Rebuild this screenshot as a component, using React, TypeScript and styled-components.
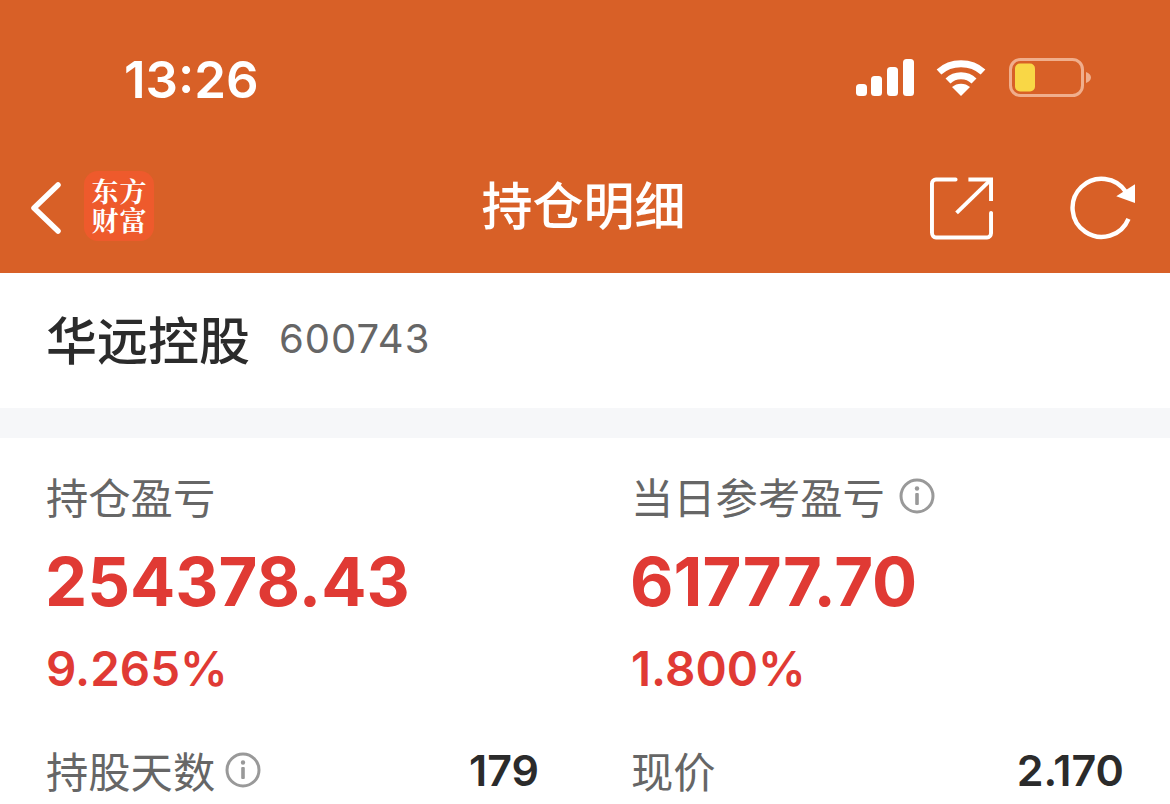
import React from 'react'
import styled, { createGlobalStyle } from 'styled-components'

const GlobalStyle = createGlobalStyle`
  html, body {
    margin: 0;
    padding: 0;
    background: #fff;
    overflow: hidden;
  }
  body {
    font-family: Inter, "Noto Sans CJK SC", sans-serif;
  }
`

const Page = styled.div`
  width: 1170px;
  height: 804px;
  overflow: hidden;
  background: #fff;
`

const Header = styled.header`
  height: 273px;
  background: #d86027;
  display: flex;
  flex-direction: column;
`

const StatusBar = styled.div`
  height: 150px;
  padding: 0 79px 0 124px;
  display: flex;
  align-items: center;
  justify-content: space-between;
  box-sizing: border-box;
`

const Clock = styled.div`
  color: #fff;
  font-size: 51px;
  font-weight: 600;
  line-height: 1;
  margin-top: 8px;
`

const StatusIcons = styled.div`
  display: flex;
  align-items: center;
  gap: 22px;
  margin-top: 5px;

  svg:last-child {
    margin-left: 1px;
  }
`

const NavBar = styled.div`
  flex: 1;
  display: flex;
  align-items: center;
  justify-content: space-between;
  padding: 0 35px 8px 30px;
`

const NavSide = styled.div`
  width: 205px;
  display: flex;
  align-items: center;
`

const NavRight = styled(NavSide)`
  justify-content: flex-end;
  gap: 76px;

  svg:first-child {
    margin-right: 1px;
  }
`

const Logo = styled.div`
  width: 70px;
  height: 70px;
  margin: 0 0 4px 22px;
  border-radius: 14px;
  background: #ee5a2c;
  color: #fff;
  display: grid;
  grid-template-columns: 1fr 1fr;
  place-items: center;
  padding: 6px 7px;
  box-sizing: border-box;
  font-family: "Noto Serif CJK SC", "Noto Sans CJK SC", serif;
  font-size: 27px;
  font-weight: 700;
  line-height: 28px;
`

const Title = styled.h1`
  margin: 0 0 8px 2px;
  color: #fff;
  font-size: 51px;
  font-weight: 500;
  font-family: "Noto Sans CJK SC", sans-serif;
  line-height: 1;
`

const StockRow = styled.div`
  height: 135px;
  padding: 0 46px 5px;
  box-sizing: border-box;
  display: flex;
  align-items: center;
  gap: 29px;
`

const StockName = styled.div`
  font-family: "Noto Sans CJK SC", sans-serif;
  font-size: 51px;
  font-weight: 500;
  color: #2b2b2b;
`

const StockCode = styled.div`
  font-size: 40px;
  color: #666;
  letter-spacing: 1px;
`

const Divider = styled.div`
  height: 30px;
  background: #f6f7f9;
`

const Stats = styled.div`
  display: grid;
  grid-template-columns: 493px 493px;
  column-gap: 92px;
  padding: 32px 46px 0;
`

const Label = styled.div`
  display: flex;
  align-items: center;
  gap: 14px;
  font-family: "Noto Sans CJK SC", sans-serif;
  font-size: 42.3px;
  line-height: 52px;
  color: #666;
`

const DetailLabel = styled(Label)`
  gap: 10px;
`

const BigValue = styled.div`
  margin: 18px 0 0 -1px;
  font-size: 67px;
  font-weight: 700;
  line-height: 84px;
  color: #e03a34;
`

const Percent = styled.div`
  margin-top: 17px;
  font-size: 47.5px;
  font-weight: 600;
  line-height: 56px;
  color: #e03a34;
`

const Detail = styled.div`
  margin-top: 47px;
  display: flex;
  align-items: center;
  justify-content: space-between;
`

const DetailValue = styled.div`
  font-size: 43px;
  font-weight: 600;
  color: #2b2b2b;
`

const InfoIcon = ({ size = 36 }: { size?: number }) => (
  <svg width={size} height={size} viewBox="0 0 36 36" fill="none">
    <circle cx="18" cy="18" r="16" stroke="#999" strokeWidth="3" />
    <rect x="16.2" y="15" width="3.6" height="12" rx="1" fill="#999" />
    <circle cx="18" cy="10.5" r="2.2" fill="#999" />
  </svg>
)

const SignalIcon = () => (
  <svg width="58" height="38" viewBox="0 0 58 38" fill="#fff">
    <rect x="0" y="25" width="11" height="12" rx="3.5" />
    <rect x="15" y="17" width="11" height="20" rx="3.5" />
    <rect x="31" y="8" width="11" height="29" rx="3.5" />
    <rect x="47" y="0" width="11" height="37" rx="3.5" />
  </svg>
)

const WifiIcon = () => (
  <svg width="50" height="37" viewBox="0 0 50 37" fill="none">
    <path d="M3 13 C15 2 35 2 47 13" stroke="#fff" strokeWidth="7" strokeLinecap="butt" />
    <path d="M12 22 C19 15 31 15 38 22" stroke="#fff" strokeWidth="7" strokeLinecap="butt" />
    <path d="M25 37 L16 28 C21 23.5 29 23.5 34 28 Z" fill="#fff" />
  </svg>
)

const BatteryIcon = () => (
  <svg width="82" height="39" viewBox="0 0 82 39" fill="none">
    <rect x="1.5" y="1.5" width="72" height="36" rx="10" stroke="#f0ae8c" strokeWidth="3" />
    <rect x="6" y="5.5" width="20" height="28" rx="5" fill="#f9d746" />
    <path d="M77 14 C80 15 82 17 82 19.5 C82 22 80 24 77 25 Z" fill="#f0ae8c" />
  </svg>
)

const BackIcon = () => (
  <svg width="32" height="52" viewBox="0 0 32 52" fill="none">
    <path d="M28 3 L4 26 L28 49" stroke="#fff" strokeWidth="5.5" strokeLinecap="round" strokeLinejoin="round" />
  </svg>
)

const ShareIcon = () => (
  <svg width="64" height="64" viewBox="0 0 64 64" fill="none" stroke="#fff" strokeWidth="4">
    <path d="M26 3 H6 C4 3 2 5 2 7 V57 C2 60 4 62 6 62 H58 C60 62 62 60 62 57 V37" strokeLinecap="round" />
    <path d="M39 3 H62 V25" />
    <path d="M27 37 L61 4" />
  </svg>
)

const RefreshIcon = () => (
  <svg width="66" height="64" viewBox="0 0 66 64" fill="none">
    <path d="M59.4 43 A29.5 29.5 0 1 1 57 16" stroke="#fff" strokeWidth="4.5" />
    <path d="M66 8 V27 L47 20 Z" fill="#fff" />
  </svg>
)

export default function App() {
  return (
    <Page>
      <GlobalStyle />
      <Header>
        <StatusBar>
          <Clock>13:26</Clock>
          <StatusIcons>
            <SignalIcon />
            <WifiIcon />
            <BatteryIcon />
          </StatusIcons>
        </StatusBar>
        <NavBar>
          <NavSide>
            <BackIcon />
            <Logo>
              <span>东</span>
              <span>方</span>
              <span>财</span>
              <span>富</span>
            </Logo>
          </NavSide>
          <Title>持仓明细</Title>
          <NavRight>
            <ShareIcon />
            <RefreshIcon />
          </NavRight>
        </NavBar>
      </Header>
      <StockRow>
        <StockName>华远控股</StockName>
        <StockCode>600743</StockCode>
      </StockRow>
      <Divider />
      <Stats>
        <div>
          <Label>持仓盈亏</Label>
          <BigValue>254378.43</BigValue>
          <Percent>9.265%</Percent>
          <Detail>
            <DetailLabel>
              持股天数
              <InfoIcon />
            </DetailLabel>
            <DetailValue>179</DetailValue>
          </Detail>
        </div>
        <div>
          <Label>
            当日参考盈亏
            <InfoIcon />
          </Label>
          <BigValue>61777.70</BigValue>
          <Percent>1.800%</Percent>
          <Detail>
            <DetailLabel>现价</DetailLabel>
            <DetailValue>2.170</DetailValue>
          </Detail>
        </div>
      </Stats>
    </Page>
  )
}
